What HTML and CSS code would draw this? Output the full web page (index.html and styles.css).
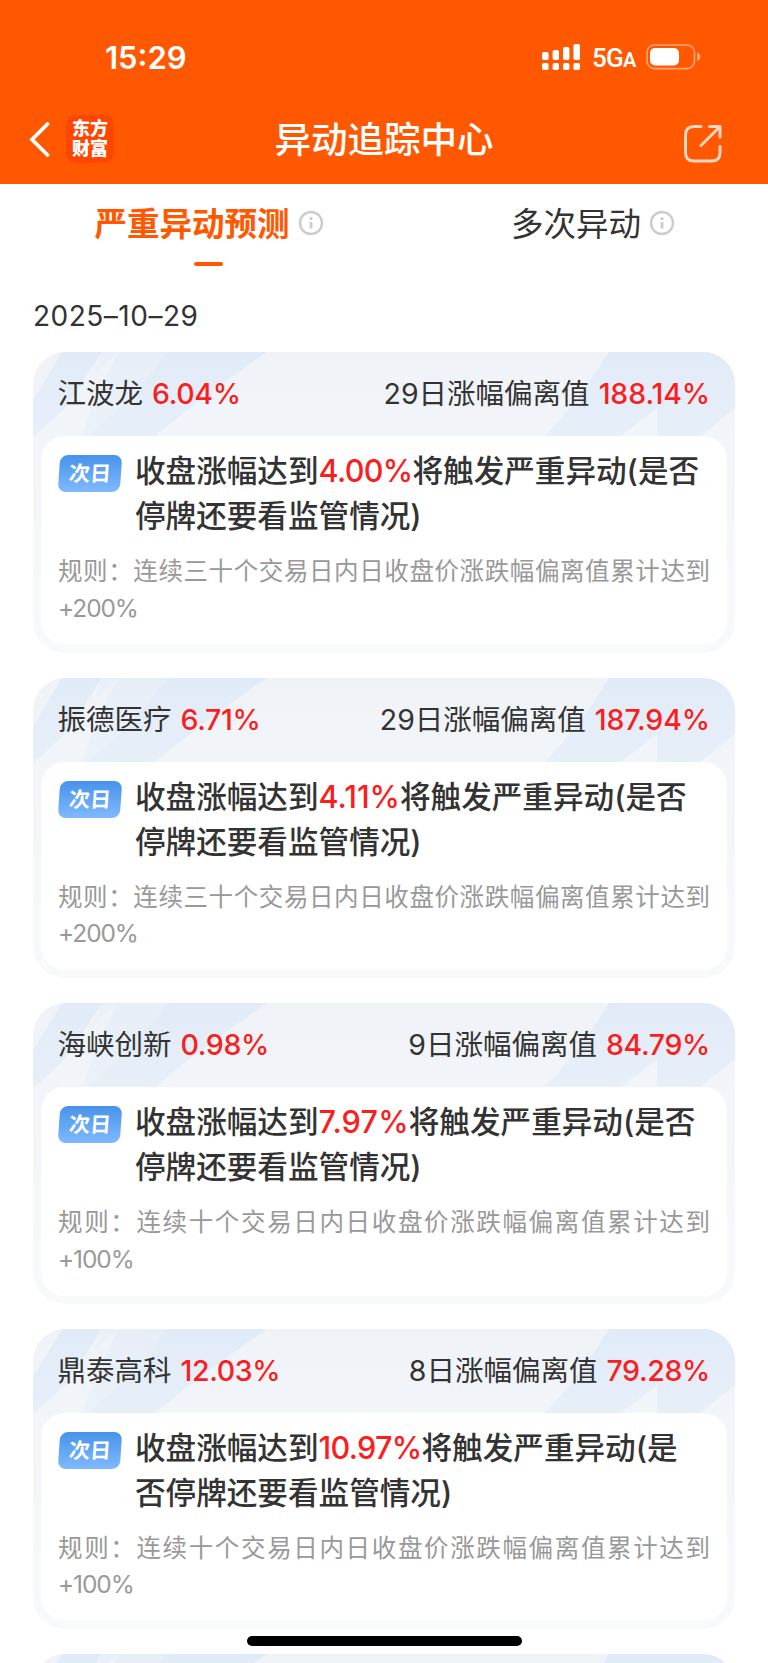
FILE: index.html
```html
<!DOCTYPE html>
<html lang="zh-CN">
<head>
    <meta charset="UTF-8">
    <meta name="viewport" content="width=device-width, initial-scale=1.0">
    <title>异动追踪中心</title>
    <link rel="stylesheet" href="styles.css">
</head>
<body>
    <svg class="defs" width="0" height="0" aria-hidden="true">
        <defs>
            <linearGradient id="streak" x1="0" y1="0" x2="0" y2="1">
                <stop offset="0" stop-color="#e1ebf7"/>
                <stop offset="1" stop-color="#e7eff9"/>
            </linearGradient>
            <symbol id="card-bg" viewBox="0 0 702 84">
                <path fill="url(#streak)" d="M29 0H69L34 54L2 84H0V48z"/>
                <path fill="url(#streak)" d="M69 0L61 22L85 0z" opacity=".5"/>
                <path fill="url(#streak)" d="M85 0H134Q100 48 54 84H49L61 50z" opacity=".6"/>
                <path fill="url(#streak)" d="M134 0H234Q175 40 122 84H54Q100 48 134 0z"/>
                <path fill="url(#streak)" d="M576 0H702V56L667 84H624V56L588 84H512Q548 46 576 0z"/>
            </symbol>
            <symbol id="info" viewBox="0 0 26 26">
                <circle cx="13" cy="13" r="11" fill="none" stroke="#ccc" stroke-width="2.4"/>
                <circle cx="13" cy="8.6" r="1.6" fill="#ccc"/>
                <path d="M13 12v6.5" stroke="#ccc" stroke-width="2.8"/>
            </symbol>
        </defs>
    </svg>

    <header class="header">
        <div class="status-bar">
            <span class="time">15:29</span>
            <div class="status-icons">
                <svg width="38" height="26" viewBox="0 0 38 26" fill="#fff">
                    <rect x="0" y="8" width="6.6" height="8" rx="1.8"/>
                    <rect x="10.6" y="6" width="6.4" height="10" rx="1.8"/>
                    <rect x="21" y="3" width="6.4" height="13" rx="1.8"/>
                    <rect x="31.4" y="0" width="6.6" height="16" rx="1.8"/>
                    <rect x="0" y="19" width="6.6" height="7" rx="1.8"/>
                    <rect x="10.6" y="19" width="6.4" height="7" rx="1.8"/>
                    <rect x="21" y="19" width="6.4" height="7" rx="1.8"/>
                    <rect x="31.4" y="19" width="6.6" height="7" rx="1.8"/>
                </svg>
                <span class="network">5G<small>A</small></span>
                <svg width="55" height="26" viewBox="0 0 55 26">
                    <rect x="1" y="1" width="47.5" height="23.6" rx="7.5" fill="none" stroke="#ffa57a" stroke-width="1.6"/>
                    <rect x="4" y="4" width="29" height="17.4" rx="5" fill="#fff"/>
                    <path d="M51 8.6q3.5 1.4 3.5 4.2t-3.5 4.2z" fill="#ffa57a"/>
                </svg>
            </div>
        </div>
        <div class="nav-bar">
            <div class="nav-left">
                <svg width="22" height="37" viewBox="0 0 22 37">
                    <path d="M19.500 3L4 18.500L19.500 34" fill="none" stroke="#fff" stroke-width="3.8" stroke-linecap="round"/>
                </svg>
                <div class="logo">东方<br>财富</div>
            </div>
            <h1 class="page-title">异动追踪中心</h1>
            <svg class="share" width="40" height="40" viewBox="0 0 40 40" fill="none" stroke="#ffd6c2" stroke-width="3" stroke-linecap="round" stroke-linejoin="round">
                <path d="M18 2.500H11Q2.500 2.500 2.500 11V28.500Q2.500 37 11 37H28.500Q37 37 37 28.500V22.500"/>
                <path d="M26.500 2.500H37V13M36.500 3L18 21.500"/>
            </svg>
        </div>
    </header>

    <nav class="tabs">
        <div class="tab active">严重异动预测<svg width="26" height="26"><use href="#info"/></svg></div>
        <div class="tab">多次异动<svg width="26" height="26"><use href="#info"/></svg></div>
    </nav>

    <main class="content">
        <div class="date">2025–10–29</div>

        <section class="card">
            <svg class="card-bg" width="702" height="84"><use href="#card-bg"/></svg>
            <div class="card-head">
                <div>江波龙 <span class="red">6.04%</span></div>
                <div>29日涨幅偏离值 <span class="red wide">188.14%</span></div>
            </div>
            <div class="panel">
                <div class="trigger">
                    <span class="badge">次日</span>
                    <p>收盘涨幅达到<span class="red tight">4.00%</span>将触发严重异动(是否<br>停牌还要看监管情况)</p>
                </div>
                <p class="rule">规则：连续三十个交易日内日收盘价涨跌幅偏离值累计达到<span>+200%</span></p>
            </div>
        </section>

        <section class="card">
            <svg class="card-bg" width="702" height="84"><use href="#card-bg"/></svg>
            <div class="card-head">
                <div>振德医疗 <span class="red">6.71%</span></div>
                <div>29日涨幅偏离值 <span class="red wide">187.94%</span></div>
            </div>
            <div class="panel">
                <div class="trigger">
                    <span class="badge">次日</span>
                    <p>收盘涨幅达到<span class="red">4.11%</span>将触发严重异动(是否<br>停牌还要看监管情况)</p>
                </div>
                <p class="rule">规则：连续三十个交易日内日收盘价涨跌幅偏离值累计达到<span>+200%</span></p>
            </div>
        </section>

        <section class="card">
            <svg class="card-bg" width="702" height="84"><use href="#card-bg"/></svg>
            <div class="card-head">
                <div>海峡创新 <span class="red">0.98%</span></div>
                <div>9日涨幅偏离值 <span class="red">84.79%</span></div>
            </div>
            <div class="panel">
                <div class="trigger">
                    <span class="badge">次日</span>
                    <p>收盘涨幅达到<span class="red wide">7.97%</span>将触发严重异动(是否<br>停牌还要看监管情况)</p>
                </div>
                <p class="rule">规则：连续十个交易日内日收盘价涨跌幅偏离值累计达到<span>+100%</span></p>
            </div>
        </section>

        <section class="card">
            <svg class="card-bg" width="702" height="84"><use href="#card-bg"/></svg>
            <div class="card-head">
                <div>鼎泰高科 <span class="red">12.03%</span></div>
                <div>8日涨幅偏离值 <span class="red">79.28%</span></div>
            </div>
            <div class="panel">
                <div class="trigger">
                    <span class="badge">次日</span>
                    <p>收盘涨幅达到<span class="red tight">10.97%</span>将触发严重异动(是<br>否停牌还要看监管情况)</p>
                </div>
                <p class="rule">规则：连续十个交易日内日收盘价涨跌幅偏离值累计达到<span>+100%</span></p>
            </div>
        </section>

        <section class="card">
            <svg class="card-bg" width="702" height="84"><use href="#card-bg"/></svg>
        </section>
    </main>

    <div class="home-indicator"></div>
</body>
</html>
```
FILE: styles.css
```css
* {
    box-sizing: border-box;
}

body {
    margin: 0;
    height: 1663px;
    position: relative;
    background-color: #fff;
    color: #333;
    font-family: Inter, "Noto Sans CJK SC", sans-serif;
}

p, h1 {
    margin: 0;
}

.defs {
    position: absolute;
}

.header {
    height: 184px;
    background-color: #ff5800;
    color: #fff;
}

.status-bar {
    height: 100px;
    padding: 14px 67px 0 105px;
    display: flex;
    justify-content: space-between;
    align-items: center;
}

.time {
    font-size: 31px;
    font-weight: 600;
}

.status-icons {
    display: flex;
    align-items: center;
    gap: 12px;
}

.network {
    width: 42px;
    padding-top: 2px;
    font-family: Roboto, sans-serif;
    font-size: 26px;
    font-weight: 500;
    letter-spacing: -0.7px;
    white-space: nowrap;
}

.network small {
    font-size: 20px;
    font-weight: 600;
}

.nav-bar {
    height: 84px;
    padding: 0 45px 6px 28px;
    display: grid;
    grid-template-columns: 86px 1fr 86px;
    align-items: center;
}

.nav-left {
    display: flex;
    align-items: center;
    gap: 16px;
}

.logo {
    width: 48px;
    height: 48px;
    border-radius: 10px;
    background-color: #ff4600;
    font-size: 18px;
    font-weight: 900;
    line-height: 20px;
    padding-top: 4px;
    text-align: center;
}

.page-title {
    padding-left: 17px;
    padding-bottom: 4px;
    font-size: 36.500px;
    font-weight: 500;
    text-align: center;
}

.share {
    justify-self: end;
    margin-top: 9px;
}

.tabs {
    height: 92px;
    display: grid;
    grid-template-columns: 1fr 1fr;
}

.tab {
    position: relative;
    display: flex;
    justify-content: center;
    align-items: center;
    height: 80px;
    padding-bottom: 5px;
    font-size: 32.500px;
}

/* keeps the label centred, the icon hangs on its right */
.tab svg {
    margin-left: 8px;
    margin-right: -34px;
    margin-top: 3px;
}

.tab.active {
    color: #ff5800;
    font-weight: 700;
}

.tab.active::after {
    content: "";
    position: absolute;
    bottom: -2px;
    left: 194px;
    width: 29px;
    height: 4px;
    border-radius: 2px;
    background-color: #ff5800;
}

.content {
    height: 1387px;
    padding: 0 33px;
    overflow: hidden;
}

.date {
    height: 76px;
    line-height: 80px;
    font-size: 28px;
    letter-spacing: 0.5px;
}

.card {
    position: relative;
    height: 300.500px;
    margin-bottom: 25px;
    padding: 0 8px 8px;
    border-radius: 32px;
    background: linear-gradient(#eff3f8, #f8f9fb);
    overflow: hidden;
}

.card-bg {
    position: absolute;
    top: 0;
    left: 0;
}

.card-head {
    position: relative;
    height: 84px;
    padding: 0 17px 5px 16.500px;
    display: flex;
    justify-content: space-between;
    align-items: center;
    font-size: 28.500px;
}

.red {
    color: #fa1e1e;
    font-weight: 500;
}

.card-head .red {
    margin-left: 1px;
    letter-spacing: -0.35px;
}

.card-head .wide {
    letter-spacing: -0.1px;
}

.trigger .tight {
    letter-spacing: -0.7px;
}

.trigger .wide {
    letter-spacing: 0.2px;
}

.panel {
    position: relative;
    height: 208.500px;
    padding: 12px 17px 0;
    border-radius: 24px;
    background-color: #fff;
}

.trigger {
    display: flex;
    gap: 14px;
    padding-left: 1px;
    font-size: 30.600px;
    line-height: 45px;
    font-weight: 500;
    white-space: nowrap;
}

.badge {
    width: 62px;
    height: 37px;
    margin-top: 7px;
    border-radius: 8px;
    background: linear-gradient(#4793ea, #80b9ff);
    transform: skewX(-4deg);
    color: #fff;
    font-size: 21px;
    line-height: 37px;
    font-weight: 700;
    text-align: center;
}

.rule {
    margin-top: 15px;
    font-size: 24.500px;
    line-height: 36.500px;
    color: #999;
    text-align: justify;
}

.rule span {
    letter-spacing: -1.1px;
}

.home-indicator {
    position: absolute;
    left: 247px;
    bottom: 17px;
    width: 275px;
    height: 10px;
    border-radius: 5px;
    background-color: #000;
}
```
